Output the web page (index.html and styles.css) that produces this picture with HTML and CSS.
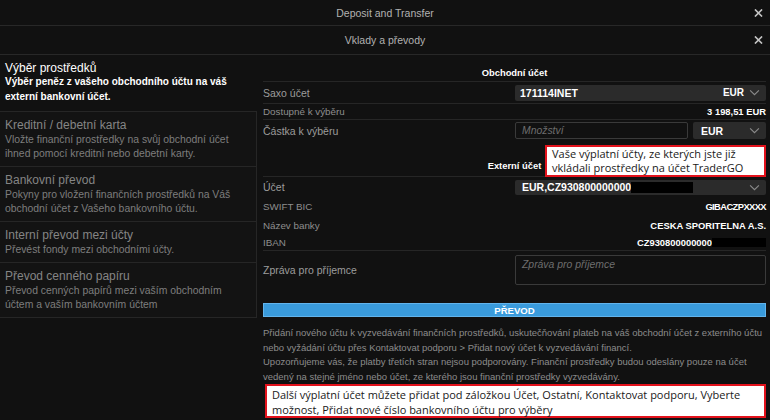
FILE: index.html
```html
<!DOCTYPE html>
<html lang="cs">
<head>
<meta charset="utf-8">
<title>Vklady a převody</title>
<link rel="stylesheet" href="styles.css">
</head>
<body>
<div class="hdr hdr1"><span class="hdr-title">Deposit and Transfer</span><svg class="close" viewBox="0 0 10 9"><path d="M1 0.5 9 8.5M9 0.5 1 8.5" stroke="#c4c4c4" stroke-width="1.8" fill="none"/></svg></div>
<div class="hdr hdr2"><span class="hdr-title">Vklady a převody</span><svg class="close" viewBox="0 0 10 9"><path d="M1 0.5 9 8.5M9 0.5 1 8.5" stroke="#c4c4c4" stroke-width="1.8" fill="none"/></svg></div>
<div class="main">
  <div class="nav">
    <div class="nav-item selected">
      <div class="nav-title">Výběr prostředků</div>
      <div class="nav-desc">Výběr peněz z vašeho obchodního účtu na váš externí bankovní účet.</div>
    </div>
    <div class="nav-list">
      <div class="nav-item">
        <div class="nav-title">Kreditní / debetní karta</div>
        <div class="nav-desc">Vložte finanční prostředky na svůj obchodní účet ihned pomocí kreditní nebo debetní karty.</div>
      </div>
      <div class="nav-item">
        <div class="nav-title">Bankovní převod</div>
        <div class="nav-desc">Pokyny pro vložení finančních prostředků na Váš obchodní účet z Vašeho bankovního účtu.</div>
      </div>
      <div class="nav-item">
        <div class="nav-title">Interní převod mezi účty</div>
        <div class="nav-desc">Převést fondy mezi obchodními účty.</div>
      </div>
      <div class="nav-item">
        <div class="nav-title">Převod cenného papíru</div>
        <div class="nav-desc">Převod cenných papírů mezi vaším obchodním účtem a vaším bankovním účtem</div>
      </div>
    </div>
  </div>
  <div class="form">
    <div class="section-h first">Obchodní účet</div>
    <div class="row row-line r-saxo">
      <div class="lbl">Saxo účet</div>
      <div class="ctl select"><span class="strong">171114INET</span><span class="sel-right"><span class="strong small">EUR</span><svg class="chev" viewBox="0 0 12 8"><path d="M1 1.5 6 6.5 11 1.5" fill="none" stroke="#8a8a8a" stroke-width="1.3"/></svg></span></div>
    </div>
    <div class="row row-line r-small">
      <div class="lbl small">Dostupné k výběru</div>
      <div class="val">3 198,51 EUR</div>
    </div>
    <div class="row r-amount">
      <div class="lbl">Částka k výběru</div>
      <div class="ctl amount">
        <div class="input"><span class="ph">Množství</span></div>
        <div class="select cur"><span class="strong">EUR</span><svg class="chev" viewBox="0 0 12 8"><path d="M1 1.5 6 6.5 11 1.5" fill="none" stroke="#8a8a8a" stroke-width="1.3"/></svg></div>
      </div>
    </div>
    <div class="section-h ext">Externí účet
      <div class="callout callout-top">Vaše výplatní účty, ze kterých jste již vkládali prostředky na účet TraderGO</div>
    </div>
    <div class="row r-acct">
      <div class="lbl">Účet</div>
      <div class="ctl select acct"><span class="strong">EUR,CZ930800000000<span class="redact r1"></span></span><svg class="chev" viewBox="0 0 12 8"><path d="M1 1.5 6 6.5 11 1.5" fill="none" stroke="#8a8a8a" stroke-width="1.3"/></svg></div>
    </div>
    <div class="row r-swift">
      <div class="lbl small">SWIFT BIC</div>
      <div class="val tight">GIBACZPXXXX</div>
    </div>
    <div class="row r-bank">
      <div class="lbl small">Název banky</div>
      <div class="val">CESKA SPORITELNA A.S.</div>
    </div>
    <div class="row row-line r-iban">
      <div class="lbl small">IBAN</div>
      <div class="val">CZ930800000000<span class="redact r2"></span></div>
    </div>
    <div class="row r-msg">
      <div class="lbl">Zpráva pro příjemce</div>
      <div class="ctl textarea"><span class="ph">Zpráva pro příjemce</span></div>
    </div>
    <div class="btn">PŘEVOD</div>
    <p class="note"><span class="ln">Přidání nového účtu k vyzvedávání finančních prostředků, uskutečňování plateb na váš obchodní účet z externího účtu</span>
      <span class="ln">nebo vyžádání účtu přes Kontaktovat podporu &gt; Přidat nový účet k vyzvedávání financí.</span>
      <span class="ln">Upozorňujeme vás, že platby třetích stran nejsou podporovány. Finanční prostředky budou odeslány pouze na účet</span>
      <span class="ln">vedený na stejné jméno nebo účet, ze kterého jsou finanční prostředky vyzvedávány.</span></p>
    <div class="callout callout-bottom">Další výplatní účet můžete přidat pod záložkou Účet, Ostatní, Kontaktovat podporu, Vyberte možnost, Přidat nové číslo bankovního účtu pro výběry</div>
  </div>
</div>
</body>
</html>
```

FILE: styles.css
```css
* { box-sizing: border-box; }
html, body { margin: 0; padding: 0; }
body {
  width: 770px;
  height: 420px;
  overflow: hidden;
  background: #111111;
  font-family: "Liberation Sans", Arial, sans-serif;
  color: #9a9a9a;
}
.hdr {
  position: relative;
  display: flex;
  align-items: center;
  justify-content: center;
  border-bottom: 1px solid #282828;
}
.hdr1 { height: 26px; }
.hdr2 { height: 29px; }
.hdr-title {
  font-size: 10.5px;
  color: #b2b2b2;
}
.close {
  position: absolute;
  right: 7px;
  top: 50%;
  width: 9px;
  height: 8px;
  margin-top: -4px;
}
.main {
  display: flex;
  align-items: flex-start;
}

/* left navigation */
.nav {
  width: 257px;
  flex: none;
  padding-top: 3px;
}
.nav-item {
  padding: 3px 6px 7px 5px;
}
.nav-list {
  border-top: 1px solid #262626;
}
.nav-list .nav-item {
  border-right: 1px solid #262626;
  border-bottom: 1px solid #262626;
  padding: 6px 6px 5px 5px;
  background: #131313;
}
.nav-title {
  font-size: 12px;
  line-height: 15px;
  color: #858585;
}
.nav-desc {
  font-size: 10.4px;
  line-height: 14px;
  color: #7e7e7e;
}
.selected .nav-title { color: #ffffff; line-height: 14px; }
.selected .nav-desc {
  color: #ffffff;
  font-weight: bold;
  font-size: 10px;
  line-height: 14.5px;
}

/* right form */
.form {
  flex: 1;
  min-width: 0;
  padding: 8px 4px 0 6px;
}
.section-h {
  position: relative;
  text-align: center;
  font-size: 9.4px;
  font-weight: bold;
  color: #ffffff;
  border-bottom: 1px solid #262626;
  line-height: 13px;
  padding: 3px 0 2px;
}
.section-h.ext {
  padding: 18px 0 4px;
}
.row {
  display: flex;
  align-items: center;
  justify-content: space-between;
}
.row-line { border-bottom: 1px solid #262626; }
.lbl {
  font-size: 10.5px;
  color: #9c9c9c;
}
.lbl.small { font-size: 9.8px; color: #8e8e8e; }
.ctl { width: 251px; flex: none; }
.r-saxo { height: 22px; }
.r-small { height: 16px; }
.r-amount { height: 21px; }
.r-acct { height: 20px; }
.r-swift { height: 19px; }
.r-bank { height: 18px; }
.r-iban { height: 17px; }
.r-msg { padding: 4px 0; }
.select {
  display: flex;
  align-items: center;
  justify-content: space-between;
  height: 16px;
  background: #2b2b2b;
  border-radius: 2px;
  padding: 0 6px 0 5px;
}
.select.acct { height: 15px; padding-left: 7px; }
.strong {
  font-size: 10.5px;
  font-weight: bold;
  color: #ffffff;
  display: flex;
  align-items: center;
}
.strong.small { font-size: 10px; }
.sel-right { display: flex; align-items: center; gap: 5px; }
.chev { width: 11px; height: 7px; }
.val {
  font-size: 9.4px;
  font-weight: bold;
  color: #ffffff;
  display: flex;
  align-items: center;
}
.val.tight { letter-spacing: -0.6px; }
.redact { display: inline-block; background: #000; }
.r1 { width: 62px; height: 11px; }
.r2 { width: 54px; height: 9px; }
.amount { display: flex; gap: 5px; }
.input {
  flex: 1;
  height: 17px;
  border: 1px solid #3a3a3a;
  border-radius: 2px;
  padding: 0 6px;
  display: flex;
  align-items: center;
}
.cur { width: 73px; flex: none; height: 17px; padding: 0 6px 0 8px; }
.ph {
  font-size: 10.4px;
  font-style: italic;
  color: #6e6e6e;
}
.textarea {
  height: 30px;
  border: 1px solid #3a3a3a;
  border-radius: 2px;
  padding: 0 6px;
  line-height: 13px;
}
.btn {
  margin-top: 14px;
  height: 14px;
  background: #3a9bdc;
  border: 1px solid #62b4ec;
  color: #ffffff;
  font-size: 9.6px;
  font-weight: bold;
  display: flex;
  align-items: center;
  justify-content: center;
}
.note {
  margin: 9px 0 0 0;
  font-size: 9.5px;
  line-height: 14.5px;
  color: #8c8c8c;
}
.ln {
  display: block;
  white-space: nowrap;
}
.callout {
  background: #ffffff;
  border: 2px solid #e3121c;
  color: #1a1a1a;
  font-family: "Open Sans", "Noto Sans", sans-serif;
  font-size: 11px;
  font-weight: normal;
  text-align: left;
}
.callout-top {
  position: absolute;
  left: 282px;
  top: 4px;
  width: 221px;
  height: 32px;
  padding: 0 5px;
  line-height: 14px;
}
.callout-bottom {
  margin: 0 0 0 2px;
  height: 34px;
  padding: 1px 5px 0;
  line-height: 15px;
}
```
